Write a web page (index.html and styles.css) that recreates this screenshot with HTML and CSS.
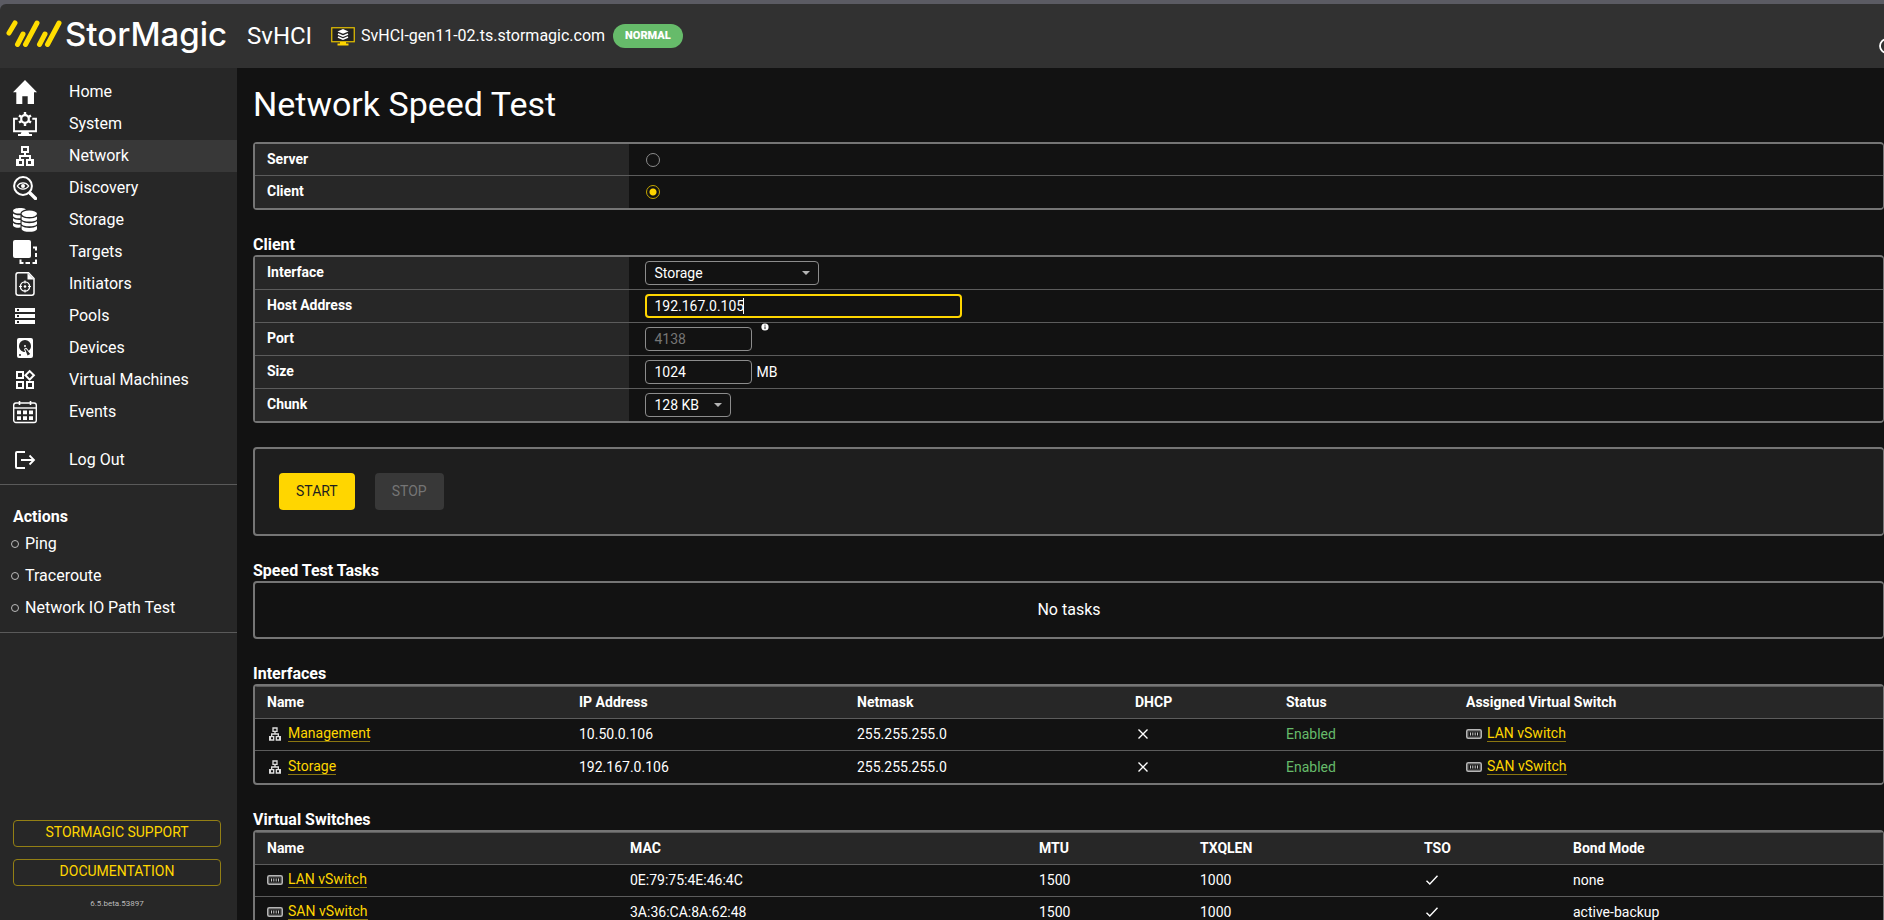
FILE: index.html
```html
<!DOCTYPE html>
<html lang="en">
<head>
<meta charset="utf-8">
<title>Network Speed Test - SvHCI</title>
<link rel="stylesheet" href="styles.css">
</head>
<body>
<svg class="sprite" aria-hidden="true">
  <symbol id="i-lan" viewBox="0 0 24 24"><path fill="currentColor" d="M13 22h8v-7h-3v-4h-5V9h3V2H8v7h3v2H6v4H3v7h8v-7H8v-2h8v2h-3v7zM10 7V4h4v3h-4zM9 17v3H6v-3h3zM18 17v3h-3v-3h3z"/></symbol>
  <symbol id="i-switch" viewBox="0 0 16 10"><rect x=".75" y=".75" width="14.5" height="8.5" rx="1.5" fill="#3a3a3a" stroke="#b5b5b5" stroke-width="1.5"/><path d="M3 3.2h10v3.8H3z" fill="#161616"/><path d="M4.5 3.5v3M6.8 3.5v3M9.2 3.5v3M11.5 3.5v3" stroke="#ccc" stroke-width="1"/></symbol>
  <symbol id="i-close" viewBox="0 0 16 16"><path d="M3.5 3.5l9 9M12.500 3.500l-9 9" fill="none" stroke="currentColor" stroke-width="1.400"/></symbol>
  <symbol id="i-check" viewBox="0 0 16 16"><path d="M2.500 8.800l3.300 3.300 7.700-8.300" fill="none" stroke="currentColor" stroke-width="1.400"/></symbol>
</svg>
<div class="window-edge"></div>
<header class="topbar">
  <a class="brand" href="#">
    <svg class="brand-mark" viewBox="0 0 56 28" aria-hidden="true"><path d="M9 3L3 13M17 14l-5.500 10.500M31 3L19.500 24.500M39 14l-5.500 10.500M53 3L41.500 24.500" fill="none" stroke="#ffdd00" stroke-width="5" stroke-linecap="round"/></svg>
    <span class="brand-name">StorMagic</span>
  </a>
  <span class="product">SvHCI</span>
  <div class="host">
    <svg class="host-icon" viewBox="0 0 24 19" aria-hidden="true"><rect x=".75" y=".75" width="22.500" height="14" fill="#222" stroke="#e8c300" stroke-width="1.200"/><path d="M9 15h6v1.500h2.500V18.500h-11V16.500H9z" fill="#ffd600"/><path d="M12 2l5.500 2.400L12 6.800 6.500 4.400z" fill="#fff"/><path d="M7 7l5 2.200L17 7M7 10l5 2.200L17 10" fill="none" stroke="#fff" stroke-width="1.600"/></svg>
    <span>SvHCI-gen11-02.ts.stormagic.com</span>
    <span class="status-pill">NORMAL</span>
  </div>
  <button class="corner-button" type="button" aria-label="Help"><svg viewBox="0 0 16 16"><circle cx="8" cy="8" r="7" fill="none" stroke="#fff" stroke-width="1.800"/></svg></button>
</header>
<div class="shell">
  <aside class="sidebar">
    <nav class="nav" aria-label="Main">
      <a href="#"><svg viewBox="0 0 24 24"><path fill="currentColor" d="M12 0l12 12.200h-3V24h-6.300v-7.800H9.300V24H3.300V12.200H0z"/></svg>Home</a>
      <a href="#"><svg viewBox="0 0 24 24"><path d="M4.700 6.700H1V19.300h22V6.700h-3.700" fill="none" stroke="currentColor" stroke-width="1.900"/><path d="M8.500 20h7l.8 2H19v2H5v-2h2.700z" fill="currentColor"/><circle cx="12" cy="7" r="3.800" fill="none" stroke="currentColor" stroke-width="2.200"/><path d="M12 0v2.800M12 11.200V14M6 3.500l2.300 1.400M15.700 9.100L18 10.500M18 3.500l-2.300 1.400M8.300 9.100L6 10.500" stroke="currentColor" stroke-width="2.400"/></svg>System</a>
      <a href="#" class="active" aria-current="page"><svg><use href="#i-lan"/></svg>Network</a>
      <a href="#"><svg viewBox="0 0 24 24"><circle cx="10" cy="10" r="8.900" fill="none" stroke="currentColor" stroke-width="2"/><path d="M17 17l5.500 5.500" stroke="currentColor" stroke-width="3.400" stroke-linecap="round"/><path d="M4.300 10C7 5.800 13 5.800 15.700 10 13 14.200 7 14.200 4.300 10z" fill="none" stroke="currentColor" stroke-width="1.300"/><circle cx="10" cy="10" r="2" fill="currentColor"/></svg>Discovery</a>
      <a href="#"><svg viewBox="0 0 24 24"><path fill="currentColor" d="M0 3C0-.5 11-1 13 1.500 10 2 7.500 3.500 7.500 5.500 4 5.800.5 5 0 3z"/><path fill="currentColor" d="M0 5.500c1.500 1.500 5 2 7.500 1.700v3C4 10.500.5 9.800 0 8zM0 10c1.500 1.700 5 2.200 7.500 1.900v3C4 15.200.5 14.500 0 12.700zM0 14.700c1.500 1.700 5 2.200 7.500 1.900v3C4 19.900.5 19.200 0 17.400z"/><ellipse cx="16.300" cy="5.800" rx="7.700" ry="3.300" fill="currentColor"/><path fill="currentColor" d="M8.600 8.500c3.500 2.600 12 2.600 15.400 0v2.700c-1 3.200-14.400 3.200-15.400 0zM8.600 13.200c3.500 2.600 12 2.600 15.400 0v2.700c-1 3.200-14.400 3.200-15.400 0zM8.600 18c3.500 2.600 12 2.600 15.400 0v2.900c-1 3.900-14.400 3.900-15.400 0z"/></svg>Storage</a>
      <a href="#"><svg viewBox="0 0 24 24"><rect width="18" height="18" rx="2" fill="currentColor"/><path d="M20 7.500h3V10.500M23 13v4M23 19.500v3.500h-3.500M7.500 19.500v3.500H10.500M12.500 23h4.500" fill="none" stroke="currentColor" stroke-width="2"/></svg>Targets</a>
      <a href="#"><svg viewBox="0 0 24 24"><path d="M5 .8h10.500L21 6.500V21a2.200 2.200 0 0 1-2.200 2.200H5.200A2.200 2.200 0 0 1 3 21V3A2.200 2.200 0 0 1 5 .8z" fill="none" stroke="currentColor" stroke-width="1.500"/><path d="M14.500 1v6.500H21z" fill="currentColor"/><circle cx="12" cy="14.500" r="4.600" fill="none" stroke="currentColor" stroke-width="1.400"/><circle cx="12" cy="14.500" r="1.300" fill="currentColor"/><path d="M12 8.500v3M12 17.500v3M6 14.500h3M15 14.500h3" stroke="currentColor" stroke-width="1.200"/></svg>Initiators</a>
      <a href="#"><svg viewBox="0 0 24 24"><path fill="currentColor" d="M2 20h20v-4H2v4zm2-3h2v2H4v-2zM2 4v4h20V4H2zm4 3H4V5h2v2zm-4 7h20v-4H2v4zm2-3h2v2H4v-2z"/></svg>Pools</a>
      <a href="#"><svg viewBox="0 0 24 24"><path fill="currentColor" d="M6,2H18A2,2 0 0,1 20,4V20A2,2 0 0,1 18,22H6A2,2 0 0,1 4,20V4A2,2 0 0,1 6,2M12,4A6,6 0 0,0 6,10C6,13.310 8.690,16 12.100,16L11.220,13.770C10.950,13.290 11.110,12.680 11.590,12.400L12.450,11.900C12.930,11.630 13.540,11.790 13.820,12.270L15.740,14.690C17.120,13.590 18,11.900 18,10A6,6 0 0,0 12,4M12,9A1,1 0 0,1 13,10A1,1 0 0,1 12,11A1,1 0 0,1 11,10A1,1 0 0,1 12,9M7,18A1,1 0 0,0 6,19A1,1 0 0,0 7,20A1,1 0 0,0 8,19A1,1 0 0,0 7,18M12.090,13.270L14.580,19.580L17.170,18.080L12.950,12.770L12.090,13.270Z"/></svg>Devices</a>
      <a href="#"><svg viewBox="0 0 24 24"><path fill="currentColor" d="M16.660 4.520l2.830 2.830-2.830 2.830-2.830-2.830 2.830-2.830M9 5v4H5V5h4m10 10v4h-4v-4h4M9 15v4H5v-4h4m7.660-13.310L11 7.340 16.660 13l5.660-5.660-5.660-5.650zM11 3H3v8h8V3zm10 10h-8v8h8v-8zm-10 0H3v8h8v-8z"/></svg>Virtual Machines</a>
      <a href="#"><svg viewBox="0 0 24 24"><rect x=".7" y="3" width="22.600" height="19.500" rx="2.200" fill="none" stroke="currentColor" stroke-width="1.400"/><path d="M1 8h22" stroke="currentColor" stroke-width="1.400"/><path d="M6.500 1v4M17.500 1v4" stroke="currentColor" stroke-width="1.600"/><path fill="currentColor" d="M4 10.500h4v3.700H4zM10 10.500h4v3.700h-4zM16 10.500h4v3.700h-4zM4 16.200h4v3.700H4zM10 16.200h4v3.700h-4zM16 16.200h4v3.700h-4z"/></svg>Events</a>
      <a href="#" class="logout"><svg viewBox="0 0 24 24"><path d="M12 4H4a1 1 0 0 0-1 1V19a1 1 0 0 0 1 1H12" fill="none" stroke="currentColor" stroke-width="2"/><path d="M8 12h13M16.500 7.500L21 12l-4.500 4.500" fill="none" stroke="currentColor" stroke-width="1.800"/></svg>Log Out</a>
    </nav>
    <section class="actions">
      <h2>Actions</h2>
      <ul>
        <li><a href="#">Ping</a></li>
        <li><a href="#">Traceroute</a></li>
        <li><a href="#">Network IO Path Test</a></li>
      </ul>
    </section>
    <footer class="sidebar-footer">
      <a class="outline-button" href="#">STORMAGIC SUPPORT</a>
      <a class="outline-button" href="#">DOCUMENTATION</a>
      <span class="version">6.5.beta.53897</span>
    </footer>
  </aside>
  <main class="content">
    <h1>Network Speed Test</h1>
    <div class="form-table mode-table">
      <div class="form-row"><label for="mode-server">Server</label><div class="field"><input type="radio" id="mode-server" name="mode"></div></div>
      <div class="form-row"><label for="mode-client">Client</label><div class="field"><input type="radio" id="mode-client" name="mode" checked></div></div>
    </div>
    <section>
      <h2>Client</h2>
      <div class="form-table">
        <div class="form-row"><label for="iface">Interface</label><div class="field"><span class="select select-wide"><select id="iface"><option>Storage</option><option>Management</option></select></span></div></div>
        <div class="form-row"><label for="host">Host Address</label><div class="field"><span class="focused"><input class="text-wide" type="text" id="host" value="192.167.0.105"></span></div></div>
        <div class="form-row"><label for="port">Port</label><div class="field"><input type="text" id="port" placeholder="4138"><svg class="info" viewBox="0 0 8 8" aria-hidden="true"><circle cx="4" cy="4" r="3.600" fill="#fff"/><path d="M4 1.700v1M4 3.400v2.700" stroke="#222" stroke-width="1"/></svg></div></div>
        <div class="form-row"><label for="size">Size</label><div class="field"><input type="text" id="size" value="1024"><span class="unit">MB</span></div></div>
        <div class="form-row"><label for="chunk">Chunk</label><div class="field"><span class="select select-narrow"><select id="chunk"><option>128 KB</option><option>256 KB</option></select></span></div></div>
      </div>
    </section>
    <div class="button-panel">
      <button class="button start" type="button">START</button>
      <button class="button stop" type="button" disabled>STOP</button>
    </div>
    <section>
      <h2>Speed Test Tasks</h2>
      <p class="empty">No tasks</p>
    </section>
    <section>
      <h2>Interfaces</h2>
      <table class="data interfaces">
        <colgroup><col class="c1"><col class="c2"><col class="c3"><col class="c4"><col class="c5"><col></colgroup>
        <thead><tr><th>Name</th><th>IP Address</th><th>Netmask</th><th>DHCP</th><th>Status</th><th>Assigned Virtual Switch</th></tr></thead>
        <tbody>
          <tr><td><span class="item"><svg class="row-lan"><use href="#i-lan"/></svg><a href="#">Management</a></span></td><td>10.50.0.106</td><td>255.255.255.0</td><td><svg class="mark" role="img" aria-label="No"><use href="#i-close"/></svg></td><td class="ok">Enabled</td><td><span class="item"><svg class="row-switch"><use href="#i-switch"/></svg><a href="#">LAN vSwitch</a></span></td></tr>
          <tr><td><span class="item"><svg class="row-lan"><use href="#i-lan"/></svg><a href="#">Storage</a></span></td><td>192.167.0.106</td><td>255.255.255.0</td><td><svg class="mark" role="img" aria-label="No"><use href="#i-close"/></svg></td><td class="ok">Enabled</td><td><span class="item"><svg class="row-switch"><use href="#i-switch"/></svg><a href="#">SAN vSwitch</a></span></td></tr>
        </tbody>
      </table>
    </section>
    <section>
      <h2>Virtual Switches</h2>
      <table class="data switches">
        <colgroup><col class="c1"><col class="c2"><col class="c3"><col class="c4"><col class="c5"><col></colgroup>
        <thead><tr><th>Name</th><th>MAC</th><th>MTU</th><th>TXQLEN</th><th>TSO</th><th>Bond Mode</th></tr></thead>
        <tbody>
          <tr><td><span class="item"><svg class="row-switch"><use href="#i-switch"/></svg><a href="#">LAN vSwitch</a></span></td><td>0E:79:75:4E:46:4C</td><td>1500</td><td>1000</td><td><svg class="mark" role="img" aria-label="Yes"><use href="#i-check"/></svg></td><td>none</td></tr>
          <tr><td><span class="item"><svg class="row-switch"><use href="#i-switch"/></svg><a href="#">SAN vSwitch</a></span></td><td>3A:36:CA:8A:62:48</td><td>1500</td><td>1000</td><td><svg class="mark" role="img" aria-label="Yes"><use href="#i-check"/></svg></td><td>active-backup</td></tr>
        </tbody>
      </table>
    </section>
  </main>
</div>
</body>
</html>
```
FILE: styles.css
```css
*, *::before, *::after { box-sizing: border-box; }

body {
  margin: 0;
  height: 100vh;
  display: flex;
  flex-direction: column;
  overflow: hidden;
  background: #121212;
  color: #fff;
  font-family: Roboto, "Liberation Sans", sans-serif;
  font-size: 14px;
  line-height: 20px;
}

a { color: inherit; text-decoration: none; }
h1, h2, p, ul { margin: 0; padding: 0; }
button, input, select { font: inherit; color: inherit; }
.sprite { position: absolute; width: 0; height: 0; }

.window-edge { flex: none; height: 16px; margin-bottom: -12px; background: #5b5b63; }

.topbar {
  position: relative;
  flex: none;
  display: flex;
  align-items: center;
  height: 64px;
  padding: 0 8px 0 6px;
  overflow: hidden;
  background: #313131;
  border-top-left-radius: 6px;
}
.brand { display: flex; align-items: center; gap: 3px; width: 241px; padding-bottom: 5px; }
.brand-mark { width: 56px; height: 28px; }
.brand-name { font: 500 33px/40px Inter, sans-serif; }
.product { width: 84px; font-size: 24px; }
.host { display: flex; align-items: center; gap: 6px; font-size: 16px; }
.host-icon { width: 24px; height: 19px; }
.status-pill {
  margin-left: 2px;
  padding: 0 12px;
  border-radius: 12px;
  background: #66bb6a;
  font-size: 11px;
  font-weight: 900;
  line-height: 24px;
}
.corner-button {
  position: absolute;
  right: -11px;
  top: 34px;
  width: 16px;
  height: 16px;
  padding: 0;
  border: 0;
  background: none;
}
.corner-button svg { display: block; }

.shell { flex: 1; min-height: 0; display: flex; }

.sidebar {
  flex: none;
  width: 237px;
  display: flex;
  flex-direction: column;
  background: #272727;
  font-size: 16px;
}
.nav { padding: 8px 0; border-bottom: 1px solid #5a5a5a; }
.nav a {
  display: flex;
  align-items: center;
  gap: 32px;
  height: 32px;
  padding-left: 13px;
}
.nav svg { width: 24px; height: 24px; }
.nav .active { background: #383838; }
.nav .logout { margin-top: 16px; }

.actions { padding: 20px 0 8px; border-bottom: 1px solid #5a5a5a; }
.actions h2 { padding-left: 13px; font-size: 16px; line-height: 23px; }
.actions ul { list-style: none; }
.actions li { display: flex; align-items: center; gap: 6px; height: 32px; padding-left: 11px; }
.actions li::before { content: ""; width: 8px; height: 8px; border: 1px solid #bbb; border-radius: 50%; }

.sidebar-footer {
  display: flex;
  flex-direction: column;
  gap: 12px;
  margin-top: auto;
  padding: 0 16px 10px 13px;
  text-align: center;
}
.outline-button {
  height: 27px;
  border: 1px solid #937f14;
  border-radius: 4px;
  color: #ffd600;
  font-size: 14px;
  line-height: 23px;
}
.version { color: #bbb; font-size: 8px; line-height: 12px; }

.content { flex: 1; min-width: 0; padding: 16px 0 0 16px; overflow: hidden; }
.content section { margin-top: 24px; }
h1 { margin-bottom: 18px; font-size: 34px; font-weight: 400; line-height: 40px; }
.content h2 { font-size: 16px; line-height: 21px; }

.form-table, .button-panel, .empty, .data {
  border: 2px solid #757575;
  border-right-width: 1px;
  border-radius: 4px;
}
.form-row { display: flex; height: 33px; border-bottom: 1px solid #5c5c5c; }
.form-row:last-child { height: 32px; border-bottom: 0; }
.mode-table .form-row { height: 32px; }
.form-row label {
  flex: 0 0 23%;
  padding: 5px 12px;
  background: #272727;
  font-weight: 700;
}
.field { display: flex; align-items: center; padding-left: 16px; }

.field input[type="radio"] {
  appearance: none;
  width: 14px;
  height: 14px;
  margin: 0 1px;
  border: 1px solid #8c8c8c;
  border-radius: 50%;
}
.field input[type="radio"]:checked {
  border-color: #c4a600;
  background: radial-gradient(circle, #ffd600 3px, transparent 4px);
}
.field input[type="text"], .field select {
  width: 107px;
  height: 24px;
  padding: 0 8px;
  border: 1px solid #8c8c8c;
  border-radius: 4px;
  outline: 0;
  appearance: none;
  background: #121212;
}
.field input::placeholder { color: #757575; opacity: 1; }
.field .text-wide[type="text"] { width: 317px; padding: 0 7px; border: 2px solid #ffd600; }
.focused { position: relative; display: flex; }
.focused::after {
  content: "";
  position: absolute;
  left: 98px;
  top: 4px;
  width: 1px;
  height: 16px;
  background: #fff;
}
.select { position: relative; display: flex; }
.select::after {
  content: "";
  position: absolute;
  right: 9px;
  top: 10px;
  border: 4px solid transparent;
  border-top-color: #b5b5b5;
  border-bottom: 0;
}
.field .select-wide select { width: 174px; }
.field .select-narrow select { width: 86px; }
.info { align-self: flex-start; width: 8px; height: 8px; margin-left: 9px; }
.unit { margin-left: 4px; }

.button-panel {
  display: flex;
  gap: 20px;
  margin-top: 24px;
  padding: 24px;
  background: #1e1e1e;
}
.button { height: 37px; padding: 0 17px 2px; border: 0; border-radius: 4px; }
.start { background: #ffd600; color: #1e1e1e; }
.stop { background: #383838; color: #757575; }
.empty { padding: 17px; font-size: 16px; text-align: center; }

.data { width: 100%; table-layout: fixed; border-collapse: separate; border-spacing: 0; overflow: hidden; }
.data th, .data td {
  height: 32px;
  padding: 0 12px 2px;
  border-top: 1px solid #5c5c5c;
  text-align: left;
  white-space: nowrap;
}
.data th { background: #272727; }
.interfaces tr:last-child td { height: 33px; padding-bottom: 1px; }
.item { display: flex; align-items: center; gap: 5px; }
.item a { color: #ffd600; line-height: 15px; border-bottom: 1px solid #8a7610; }
.row-lan { width: 16px; height: 16px; color: #ddd; }
.row-switch { width: 16px; height: 10px; }
.mark { display: block; width: 16px; height: 16px; }
.ok { color: #66bb6a; }
.interfaces .c1 { width: 312px; }
.interfaces .c2, .interfaces .c3 { width: 278px; }
.interfaces .c4 { width: 151px; }
.interfaces .c5 { width: 180px; }
.switches .c1 { width: 363px; }
.switches .c2 { width: 409px; }
.switches .c3 { width: 161px; }
.switches .c4 { width: 224px; }
.switches .c5 { width: 149px; }
```
